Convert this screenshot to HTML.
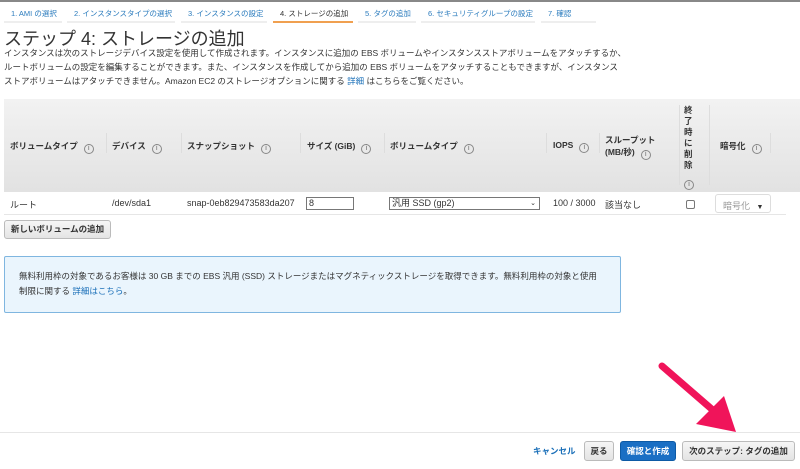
<!DOCTYPE html>
<html><head><meta charset="utf-8"><style>
*{margin:0;padding:0;box-sizing:border-box}
body{width:800px;height:469px;overflow:hidden;background:#fff;font-family:"Liberation Sans","Noto Sans CJK JP",sans-serif;color:#333;position:relative}
.a{position:absolute;white-space:nowrap}
.tab{position:absolute;top:3px;height:20px;font-size:7.5px;color:#2a7bbd;padding:5px 0 0 7px;border-bottom:2px solid #eee;white-space:nowrap;overflow:hidden}
.h{position:absolute;top:140px;font-size:8.5px;font-weight:bold;color:#333;white-space:nowrap}
.i{display:inline-block;width:10px;height:10px;border:1px solid #888;border-radius:50%;font-size:7px;text-align:center;line-height:8px;color:#666;font-weight:normal;margin-left:6px;vertical-align:-1px}
.sep{position:absolute;top:133px;width:1px;height:20px;background:#ddd}
.c{position:absolute;top:198px;font-size:9px;color:#333;white-space:nowrap}
.btn{position:absolute;font-size:8.5px;font-weight:bold;border:1px solid #bbb;border-radius:3px;background:linear-gradient(#f6f6f6,#e4e4e4);text-align:center;color:#333;white-space:nowrap}
</style></head><body>
<div class="a" style="left:0;top:0;width:800px;height:2px;background:#888"></div>
<div class="tab" style="left:4px;width:58px">1. AMI の選択</div>
<div class="tab" style="left:67px;width:108px">2. インスタンスタイプの選択</div>
<div class="tab" style="left:181px;width:86px">3. インスタンスの設定</div>
<div class="tab" style="left:273px;width:80px;color:#333;border-bottom-color:#f0a050">4. ストレージの追加</div>
<div class="tab" style="left:358px;width:58px">5. タグの追加</div>
<div class="tab" style="left:421px;width:114px">6. セキュリティグループの設定</div>
<div class="tab" style="left:541px;width:55px">7. 確認</div>
<div class="a" style="left:4px;top:30px;font-size:18px;line-height:19px;color:#333">ステップ 4: ストレージの追加</div>
<div class="a" style="left:4px;top:46px;font-size:8.5px;line-height:14px;color:#333">インスタンスは次のストレージデバイス設定を使用して作成されます。インスタンスに追加の EBS ボリュームやインスタンスストアボリュームをアタッチするか、<br>ルートボリュームの設定を編集することができます。また、インスタンスを作成してから追加の EBS ボリュームをアタッチすることもできますが、インスタンス<br>ストアボリュームはアタッチできません。Amazon EC2 のストレージオプションに関する <span style="color:#1a6fb8">詳細</span> はこちらをご覧ください。</div>
<div class="a" style="left:4px;top:99px;width:796px;height:93px;background:linear-gradient(#f2f2f2,#e2e2e2)"></div>
<div class="h" style="left:10px">ボリュームタイプ<span class="i">i</span></div>
<div class="sep" style="left:106px"></div>
<div class="h" style="left:112px">デバイス<span class="i">i</span></div>
<div class="sep" style="left:181px"></div>
<div class="h" style="left:187px">スナップショット<span class="i">i</span></div>
<div class="sep" style="left:300px"></div>
<div class="h" style="left:307px">サイズ (GiB)<span class="i">i</span></div>
<div class="sep" style="left:384px"></div>
<div class="h" style="left:390px">ボリュームタイプ<span class="i">i</span></div>
<div class="sep" style="left:546px"></div>
<div class="h" style="left:553px">IOPS<span class="i">i</span></div>
<div class="sep" style="left:599px"></div>
<div class="h" style="left:605px;top:134px;line-height:12px">スループット<br>(MB/秒)<span class="i">i</span></div>
<div class="sep" style="left:679px;top:105px;height:80px"></div>
<div class="h" style="left:684px;top:105px;line-height:11px;width:12px;white-space:normal">終<br>了<br>時<br>に<br>削<br>除</div>
<div class="a" style="left:684px;top:172px"><span class="i" style="margin:0">i</span></div>
<div class="sep" style="left:709px;top:105px;height:80px"></div>
<div class="h" style="left:720px">暗号化<span class="i">i</span></div>
<div class="sep" style="left:770px"></div>
<div class="a" style="left:4px;top:214px;width:782px;height:1px;background:#e6e6e6"></div>
<div class="c" style="left:10px">ルート</div>
<div class="c" style="left:112px">/dev/sda1</div>
<div class="c" style="left:187px">snap-0eb829473583da207</div>
<div class="a" style="left:306px;top:197px;width:48px;height:13px;border:1px solid #777;font-size:9px;padding-left:2px;line-height:11px">8</div>
<div class="a" style="left:389px;top:197px;width:151px;height:13px;border:1px solid #777;font-size:9px;padding-left:2px;line-height:11px">汎用 SSD (gp2)<span style="position:absolute;right:3px;font-size:7px">&#8964;</span></div>
<div class="c" style="left:553px">100 / 3000</div>
<div class="c" style="left:605px">該当なし</div>
<div class="a" style="left:686px;top:200px;width:9px;height:9px;border:1px solid #777;border-radius:2px"></div>
<div class="a" style="left:715px;top:194px;width:56px;height:19px;border:1px solid #ddd;border-radius:3px;font-size:9px;color:#999;padding:4px 0 0 7px">暗号化 <span style="color:#333;font-size:7px;margin-left:4px">▼</span></div>
<div class="btn" style="left:4px;top:220px;width:107px;height:19px;line-height:17px">新しいボリュームの追加</div>
<div class="a" style="left:4px;top:256px;width:617px;height:57px;background:#eaf5fd;border:1px solid #7fb6e0;border-radius:2px;font-size:8.5px;line-height:15px;padding:12px 0 0 14px;color:#333">無料利用枠の対象であるお客様は 30 GB までの EBS 汎用 (SSD) ストレージまたはマグネティックストレージを取得できます。無料利用枠の対象と使用<br>制限に関する <span style="color:#1a6fb8">詳細はこちら</span>。</div>
<div class="a" style="left:0;top:432px;width:800px;height:1px;background:#e6e6e6"></div>
<div class="a" style="left:533px;top:445px;font-size:8.5px;font-weight:bold;color:#1a6fb8">キャンセル</div>
<div class="btn" style="left:584px;top:441px;width:30px;height:20px;line-height:18px">戻る</div>
<div class="btn" style="left:620px;top:441px;width:56px;height:20px;line-height:18px;background:#1a6fc4;border-color:#0d5aa5;color:#fff">確認と作成</div>
<div class="btn" style="left:682px;top:441px;width:113px;height:20px;line-height:18px">次のステップ: タグの追加</div>
<svg class="a" style="left:0;top:0" width="800" height="469"><line x1="662" y1="366" x2="722" y2="418" stroke="#f0145a" stroke-width="7" stroke-linecap="round"/><polygon points="736,432 696,424 724,396" fill="#f0145a"/></svg>
</body></html>
